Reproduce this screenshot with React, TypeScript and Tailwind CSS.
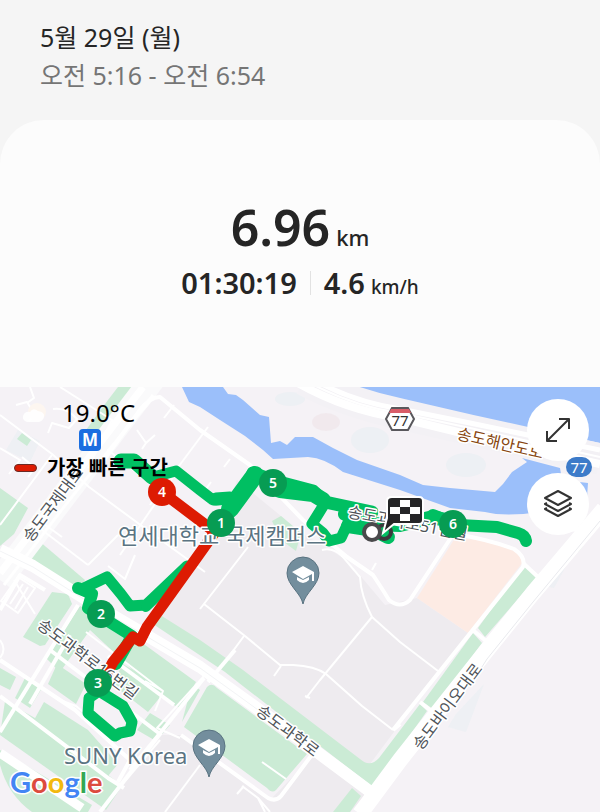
import React from "react";

const GREEN = "#cbebd5";
const WATER = "#9bbffa";

const parks = [
  "M0 488 L28 508 L14 534 L0 546Z",
  "M32 535 L85 580 L74 595 L26 560Z",
  "M52 592 L68 594 L72 604 L45 645 L40 646 L23 637Z",
  "M80 606 L130 634 L196 682 L181 709 L165 700 L90 630 L60 672 L46 658Z",
  "M57 664 L86 684 L76 704 L48 684Z",
  "M0 668 L16 677 L10 690 L0 685Z",
  "M25 678 L42 688 L30 708 L15 698Z",
  "M5 701 L42 722 L122 786 L106 810 L0 735Z",
  "M44 702 L88 730 L118 764 L108 776 L34 720Z",
  "M0 750 L92 805 L88 812 L32 812 Q8 795 0 765Z",
  "M123 664 L166 690 L148 712 L112 684Z",
  "M150 713 L170 725 L156 741 L137 730Z",
  "M182 722 L200 690 L192 684Z",
  "M157 613 L200 640 L243 670 L360 759 Q370 768 379 758 L420 704 L427 711 L373 787 L320 746 L225 672 L150 622Z",
  "M207 687 Q212 682 217 688 L307 754 L276 790 Q272 794 267 788 L184 727Z",
  "M423 702 L473 633 L482 643 L433 709Z",
  "M478 628 L523 565 L537 577 L485 637Z",
  "M333 812 L352 788 L361 796 L350 812Z",
  "M108 400 L118 387 L133 387 L100 432 L86 430Z",
  "M22 433 L31 440 L27 446 L17 439Z",
  "M272 521 L281 516 L301 533 L296 551 L281 540Z",
  "M578 541 l5 5 l-5 6 l-7 -3Z",
];

const thinRoads = [
  "M0 415 L52 454 L89 487 L150 532 L205 572",
  "M150 402 L108 450 L215 535",
  "M208 427 L150 505",
  "M176 473 L120 555",
  "M52 455 L0 525",
  "M60 387 L112 420 L88 468",
  "M16 405 L27 402 L35 415 L29 421 M30 387 L34 398 L27 403",
  "M48 433 L52 423 L69 428 L77 419 Q67 407 53 409",
  "M0 448 L20 460 L9 474 M22 457 L35 468 L28 477",
  "M137 430 L146 443 L155 435 M146 443 L142 449",
  "M164 418 L174 405",
  "M230 459 L224 467 M211 482 L206 489",
  "M33 516 L62 537 M38 518 L29 526",
  "M42 530 L88 565 M88 565 L118 535",
  "M135 555 L125 579 L108 566",
  "M35 614 L14 580 M18 577 L35 588 L18 613 L1 601Z",
  "M23 584 L10 604 M28 587 L15 609",
  "M248 547 L200 609 M204 604 L245 636 L280 665 L293 665 Q315 666 326 674 L362 706 L393 730",
  "M372 617 L320 680 L306 698 M281 666 L274 676 M305 696 L310 698",
  "M322 550 Q333 547 343 557 L360 577 Q361 596 372 617 L400 642 L438 671",
  "M244 636 L219 670",
  "M372 570 L376 563",
  "M86 632 L163 691 L155 711 M163 691 L145 681",
  "M57 699 L76 706 L88 716",
  "M180 738 L157 728 L204 676",
  "M121 786 L160 740",
  "M0 640 Q7 649 0 658",
  "M262 762 L286 779",
  "M242 786 L258 798 L265 812 M237 794 L244 786 M258 798 L270 812",
  "M165 812 L200 765",
];

const mediumRoads = [
  "M100 465 L140 410 Q150 397 160 397 L200 430 L250 465 L303 520 L347 557 L373 575 Q383 590 389 600 Q400 609 410 600 L456 530",
  "M456 534 Q490 540 514 549 Q526 557 523 567 L393 730",
  "M523 563 L538 577",
  "M474 631 L486 641",
  "M420 702 L430 710",
  "M393 730 L400 724",
  "M0 660 L75 710 L130 760 L118 782",
  "M0 696 L108 778 L124 788",
  "M78 605 L0 732",
  "M70 635 L30 704",
  "M45 590 L20 575 L0 610",
  "M50 650 L160 734 L100 812",
  "M108 656 L174 705",
  "M204 678 L157 737 L130 770",
  "M181 735 L268 798 Q276 802 281 796 L314 752",
  "M235 650 L208 682",
];

const mapLabels = [
  { text: "송도국제대로", x: 31, y: 543, angle: -53 },
  { text: "송도과학로16번길", x: 36, y: 627, angle: 37 },
  { text: "송도과학로", x: 255, y: 713, angle: 37 },
  { text: "송도바이오대로", x: 421, y: 751, angle: -53 },
  { text: "송도과학로51번길", x: 347, y: 517, angle: 11 },
];

const kilometres = [
  { n: 1, x: 221, y: 523 },
  { n: 2, x: 101, y: 614 },
  { n: 3, x: 98, y: 683 },
  { n: 4, x: 162, y: 492 },
  { n: 5, x: 273, y: 483 },
  { n: 6, x: 453, y: 524 },
];

function CampusPin({ x, y }: { x: number; y: number }) {
  return (
    <g transform={`translate(${x} ${y})`}>
      <path
        d="M0 31 C-2 20 -16 12 -16 0 A16 16 0 0 1 16 0 C16 12 2 20 0 31Z"
        fill="#738e9d"
        stroke="#597381"
        strokeWidth="1"
      />
      <path d="M-11 -1 L0 -7 L11 -1 L11 8 L9 8 L9 1 L0 6Z" fill="#fff" />
      <path d="M-6 4 L0 7 L6 4 L6 7 Q0 13 -6 7Z" fill="#fff" />
    </g>
  );
}

function RouteMap() {
  return (
    <svg
      className="absolute inset-0 h-full w-full font-['Noto_Sans','Noto_Sans_CJK_KR',sans-serif]"
      viewBox="0 387 600 425"
      preserveAspectRatio="xMinYMin slice"
      role="img"
      aria-label="운동 경로 지도"
    >
      <rect x="0" y="387" width="600" height="425" fill="#f5f2f6" />
      <path d="M237 480 L303 534 L347 560 L385 605 L417 598 L468 633 L367 768 L157 613 L225 512Z" fill="#eeebef" />
      <path d="M181 735 L270 800 L314 755 L366 795 L350 812 L100 812 L160 735Z" fill="#eeebef" />
      <path d="M455 538 Q490 540 517 549 L523 562 L468 633 L417 598Z" fill="#fdebe4" />
      <g fill="#e7eff3" opacity=".55">
        <ellipse cx="290" cy="399" rx="15" ry="7" />
        <ellipse cx="370" cy="440" rx="19" ry="13" />
        <ellipse cx="466" cy="465" rx="20" ry="12" />
        <path d="M566 545 L575 550 L554 588 L540 585Z" />
        <path d="M484 684 L466 732 L448 727 L456 714Z" />
        <path d="M18 430 L40 441 L30 462 L6 450Z" />
      </g>
      <ellipse cx="326" cy="422" rx="14" ry="9" fill="#efe6ea" opacity=".7" />
      <path d="M340 387 L400 403 L500 422 L600 443 L600 387Z" fill={WATER} />
      <path
        d="M182 387 L223 387 L228 394 L236 395 L243 400 L260 415 L269 417 L271 443 L280 441 L287 445 L295 437 L313 437 L333 448 L357 460 L400 475 L423 485 L450 488 L495 492 L503 484 L512 472 L527 462 L522 458 L560 468 L562 480 L588 483 L587 497 L540 512 Q505 517 485 512 L450 508 L400 490 L343 472 Q325 458 308 457 L273 459 L263 450 L245 436 L220 420 L200 407 L189 402Z"
        fill={WATER}
      />
      <g fill={GREEN}>
        {parks.map((d) => (
          <path key={d} d={d} />
        ))}
      </g>
      <g fill="none" strokeLinejoin="round">
        <path d="M304 380 Q345 402 400 414 L470 430 L600 459" stroke="#f3f1f5" strokeWidth="31" />
        <path d="M296 382 Q345 410 400 418 L470 435 L600 464" stroke="#fff" strokeWidth="8" />
        <path d="M318 382 Q355 402 400 409 L470 423 L600 450" stroke="#fff" strokeWidth="5" />
        <path d="M308 382 Q355 407 400 413 L470 428 L600 457" stroke="#fff" strokeWidth="2" />
        <path d="M156 375 L0 580" stroke="#fafafb" strokeWidth="25" />
        <path d="M143 387 L0 573" stroke="#fff" strokeWidth="7" />
        <path d="M153 395 L67 503 L4 585" stroke="#fff" strokeWidth="3" />
        {thinRoads.map((d) => (
          <path key={d} d={d} stroke="#fff" strokeWidth="2" />
        ))}
        {mediumRoads.map((d) => (
          <path key={d} d={d} stroke="#fff" strokeWidth="4" />
        ))}
        <path d="M0 753 L82 808" stroke="#fff" strokeWidth="9" />
        <path d="M0 550 L33 566 L90 602 L200 667 L243 698 L313 749 L376 796" stroke="#fff" strokeWidth="12" />
        <path d="M0 551 L33 567 L90 603 L200 668 L243 699 L313 750" stroke="#f3f4f6" strokeWidth="1" />
        <path d="M604 509 L533 593 L487 650 L400 760 L360 814" stroke="#fff" strokeWidth="16" />
        <path d="M600 521 L533 602 L487 659 L480 670" stroke="#e9eaee" strokeWidth="1" />
        <path d="M551 524 Q565 533 580 528" stroke="#fff" strokeWidth="4" />
      </g>
      <g fill="none" stroke="#00bf62" strokeLinecap="round" strokeLinejoin="round" strokeWidth="11">
        <path d="M121 461 L134 461 L152 477" strokeWidth="15" />
        <path d="M134 462 L162 485 M157 476 L176 471 L200 490 L213 500 L229 499" />
        <path d="M216 499 L230 498" strokeWidth="13" />
        <path d="M230 509 L255 475" strokeWidth="18" />
        <path d="M222 522 L236 500" strokeWidth="11" />
        <path d="M253 473 L275 481 L313 491 L325 502 L372 512" strokeWidth="13" />
        <path d="M280 490 L313 494 L323 500" strokeWidth="16" />
        <path d="M325 503 L312 524 L323 533 L329 541 L341 538 L348 523" strokeWidth="11" />
        <path d="M345 514 L372 524 L400 525 L433 517 L460 524" strokeWidth="14" />
        <path d="M348 526 L374 530 L388 537" strokeWidth="14" />
        <path d="M433 515 L459 525 L497 527 L518 533 Q525 535 526 541" strokeWidth="12" />
        <path d="M187 566 L146 605 L130 606 L121 594 L107 577 L82 589" />
        <path d="M187 568 L146 607" strokeWidth="10" />
        <path d="M78 588 L92 594 L88 608 L100 616 L132 636 L116 664" strokeWidth="12" />
        <path d="M99 691 L89 698 L88 713 L115 736 L120 733 L130 731 L132 722 L123 706 L99 691" strokeWidth="11" />
      </g>
      <path
        d="M162 492 L215 532 L195 560 L147 627 L140 641 L133 637 L113 662 L107 673"
        fill="none"
        stroke="#dd1b02"
        strokeWidth="11"
        strokeLinejoin="round"
      />
      <g
        fill="#4e5358"
        stroke="#fff"
        strokeWidth="3"
        strokeLinejoin="round"
        paintOrder="stroke"
        fontSize="16"
        fontWeight="400"
      >
        {mapLabels.map((l) => (
          <text key={l.text} transform={`translate(${l.x} ${l.y}) rotate(${l.angle})`}>
            {l.text}
          </text>
        ))}
        <text transform="translate(456 439) rotate(13)" fill="#87460f">
          송도해안도로
        </text>
        <g fill="#5b7482" fontSize="22">
          <text x="118" y="544">연세대학교 국제캠퍼스</text>
          <text x="64" y="764">SUNY Korea</text>
        </g>
      </g>
      <CampusPin x={303} y={573} />
      <CampusPin x={209} y={746} />
      <g>
        <path d="M386 419 L392 408 L408 408 L414 419 L408 430 L392 430Z" fill="#fff" stroke="#59585c" strokeWidth="2" />
        <path d="M391 409 L409 409 L411 413 L389 413Z" fill="#d95d68" />
        <text x="400" y="426" textAnchor="middle" fontSize="15" fill="#333">77</text>
        <rect x="566" y="457" width="26" height="20" rx="10" fill="#3d7bc9" />
        <text x="579" y="473" textAnchor="middle" fontSize="15" fill="#fff">77</text>
        <rect x="79" y="429" width="22" height="22" rx="4" fill="#1b6ee0" />
        <text x="90" y="446" textAnchor="middle" fontSize="17" fontWeight="700" fill="#fff">M</text>
      </g>
      <circle cx="384" cy="532" r="7" fill="none" stroke="#3a3a3c" strokeWidth="4" />
      <path
        d="M392 497 H419 Q423 497 423 501 V520 Q423 524 419 524 H394 L383 533 L387 518 V501 Q387 497 392 497Z"
        fill="#252527"
        stroke="#fff"
        strokeWidth="2"
      />
      <path d="M400 500h10v7h-10z M390 507h10v7h-10z M410 507h10v7h-10z M400 514h10v7h-10z" fill="#fff" />
      <circle cx="372" cy="532" r="8" fill="#fff" stroke="#4a4a4c" strokeWidth="4" />
      {kilometres.map((k) => (
        <g key={k.n}>
          <circle cx={k.x} cy={k.y} r="14" fill={k.n === 4 ? "#dd1b02" : "#079c53"} />
          <text x={k.x} y={k.y + 5} textAnchor="middle" fontSize="14" fontWeight="600" fill="#fff">
            {k.n}
          </text>
        </g>
      ))}
    </svg>
  );
}

function MapButton({ label, children }: { label: string; children: React.ReactNode }) {
  return (
    <button
      type="button"
      aria-label={label}
      className="flex size-[62px] items-center justify-center rounded-full bg-white text-[#333]"
    >
      <svg className="size-8" viewBox="0 0 32 32" fill="none" stroke="currentColor" strokeWidth="2" strokeLinejoin="round">
        {children}
      </svg>
    </button>
  );
}

export default function App() {
  return (
    <main className="flex min-h-screen flex-col bg-[#f5f5f5] font-['Noto_Sans','Noto_Sans_CJK_KR',sans-serif] text-[#252525]">
      <header className="px-10 pt-[18px] pb-[26px] text-[25px] leading-[38px]">
        <h1>5월 29일 (월)</h1>
        <p className="text-[#757575]">오전 5:16 - 오전 6:54</p>
      </header>

      <section className="flex flex-col items-center rounded-t-[44px] bg-[#fcfcfc] pt-[71px] pb-[84px] font-semibold">
        <p className="flex items-baseline gap-[6px] text-[50px] leading-[72px]">
          6.96 <span className="text-[22px] leading-8 font-medium">km</span>
        </p>
        <div className="flex items-center text-[29px] leading-[40px]">
          <span>01:30:19</span>
          <span className="mx-[13px] h-6 w-px bg-[#e2e2e2]" />
          <span className="flex items-baseline gap-[6px]">
            4.6 <span className="text-[19px] leading-6 font-medium">km/h</span>
          </span>
        </div>
      </section>

      <section className="relative min-h-[425px] flex-1 overflow-hidden">
        <RouteMap />
        <div className="absolute top-[10px] left-[14px]">
          <div className="flex h-8 items-center gap-4 pl-2">
            <svg className="h-5 w-6" viewBox="0 0 24 20">
              <circle cx="15" cy="9" r="9" fill="#fdf6f0" />
              <path d="M5 19 Q0 17 1 13 Q3 8 8 9 Q11 4 16 8 Q23 9 22 14 Q21 18 17 19Z" fill="#fff" opacity=".9" />
            </svg>
            <span className="text-[24px] text-black">19.0°C</span>
          </div>
          <div className="mt-[25px] flex h-7 items-center gap-[10px]">
            <span className="h-2 w-[23px] rounded-full border border-[#6b2a24] bg-[#dd1b02]" />
            <span className="text-[20px] leading-7 font-bold text-black">가장 빠른 구간</span>
          </div>
        </div>
        <div className="absolute top-3 right-[11px] flex flex-col gap-3">
          <MapButton label="지도 확대">
            <path d="M5 27 L27 5 M17 5 H27 V15 M5 17 V27 H15" />
          </MapButton>
          <MapButton label="지도 유형">
            <path d="M16 3 L29 10 L16 17 L3 10Z M5 15 L3 16 L16 23 L29 16 L27 15 M5 20 L3 21 L16 28 L29 21 L27 20" />
          </MapButton>
        </div>
        <div
          aria-label="Google"
          className="absolute bottom-3 left-[10px] flex font-['Lato',sans-serif] text-[29px] leading-9 font-bold [-webkit-text-stroke:3px_white] [paint-order:stroke_fill]"
        >
          <span className="text-[#4285f4]">G</span>
          <span className="text-[#dc4c3f]">o</span>
          <span className="text-[#f2b90f]">o</span>
          <span className="text-[#4285f4]">g</span>
          <span className="text-[#34a853]">l</span>
          <span className="text-[#dc4c3f]">e</span>
        </div>
      </section>
    </main>
  );
}
